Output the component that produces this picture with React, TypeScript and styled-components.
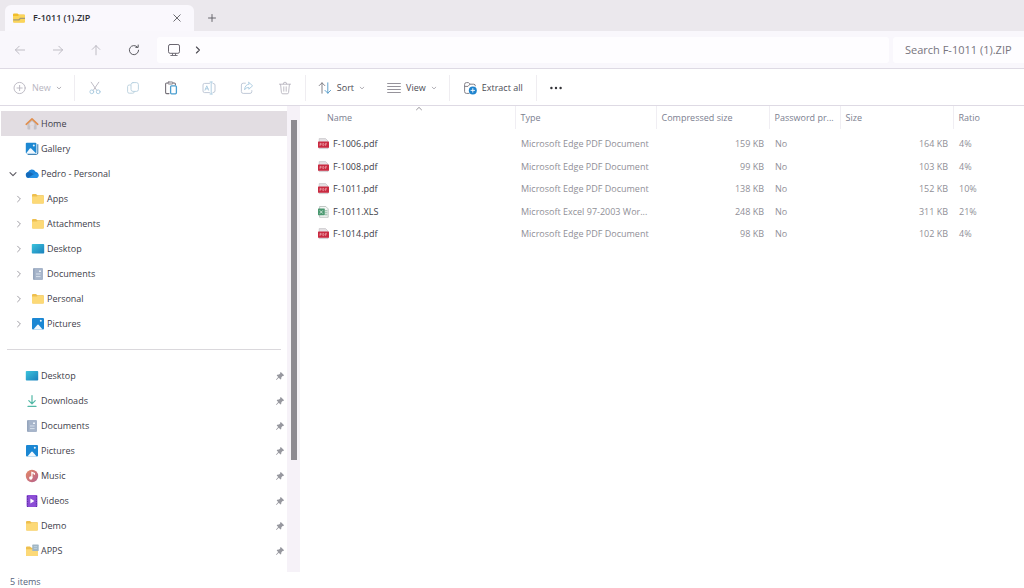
import React from "react";
import styled, { createGlobalStyle, css } from "styled-components";

const GlobalStyle = createGlobalStyle`
  *, *::before, *::after { box-sizing: border-box; }
  body {
    margin: 0;
    background: #ffffff;
    color: #3c3c44;
    font-family: "Open Sans", "Noto Sans", sans-serif;
    font-size: 9px;
    line-height: 14px;
  }
  button, input { font: inherit; color: inherit; }
  svg { display: block; flex: none; }
`;

const Window = styled.div`
  display: flex;
  flex-direction: column;
  min-height: 100vh;
`;

/* ---------- tab strip ---------- */

const TabStrip = styled.header`
  display: flex;
  align-items: flex-end;
  gap: 8px;
  height: 31px;
  padding-left: 5px;
  background: #ebe8ed;
`;

const Tab = styled.div`
  display: flex;
  align-items: center;
  gap: 7px;
  width: 189px;
  height: 26px;
  padding: 0 7px;
  border-radius: 6px 6px 0 0;
  background: #faf8fd;
`;

const TabTitle = styled.span`
  flex: 1;
  color: #2c2c32;
  font-weight: 600;
`;

const IconButton = styled.button`
  display: flex;
  align-items: center;
  justify-content: center;
  width: 20px;
  height: 26px;
  padding: 0;
  border: 0;
  background: none;
  color: #5a5a60;
`;

/* ---------- navigation bar ---------- */

const NavBar = styled.div`
  display: flex;
  align-items: stretch;
  gap: 4px;
  height: 38px;
  padding: 6px 0 5px;
  border-bottom: 1px solid #dedae4;
  background: #f9f7fc;
`;

const NavButtons = styled.nav`
  display: flex;
  align-items: center;
  width: 153px;
  padding-left: 1px;
`;

const NavButton = styled.button`
  display: flex;
  align-items: center;
  justify-content: center;
  width: 38px;
  height: 26px;
  padding: 0;
  border: 0;
  background: none;
  color: #5a5a60;
  &:disabled { color: #b8b5be; }
`;

const AddressBar = styled.div`
  display: flex;
  flex: 1;
  align-items: center;
  gap: 13px;
  padding-left: 10px;
  border-radius: 3px;
  background: #fefdff;
  color: #6a6670;
`;

const SearchInput = styled.input`
  width: 131px;
  padding: 0 0 0 12px;
  border: 0;
  border-radius: 3px 0 0 3px;
  background: #fefdff;
  font-size: 11px;
  &::placeholder { color: #77747d; opacity: 1; }
`;

/* ---------- command bar ---------- */

const CommandBar = styled.div`
  display: flex;
  align-items: center;
  height: 37px;
  padding: 1px 0 0 1px;
  border-bottom: 1px solid #dedae4;
`;

const CommandGroup = styled.div<{ $pad?: number; $gap?: number }>`
  display: flex;
  align-items: center;
  gap: ${(p) => p.$gap ?? 0}px;
  padding: 0 ${(p) => p.$pad ?? 0}px;
  & + & { border-left: 1px solid #efedf1; }
`;

const CommandButton = styled.button<{ $iconOnly?: boolean }>`
  display: flex;
  align-items: center;
  justify-content: ${(p) => (p.$iconOnly ? "center" : "flex-start")};
  gap: 5px;
  height: 26px;
  padding: 0;
  border: 0;
  background: none;
  color: #4c4c55;
  ${(p) => p.$iconOnly && css`width: 38px;`}
  &:disabled { color: #b8b6bf; }
`;

/* ---------- body ---------- */

const Body = styled.div`
  display: flex;
  flex: 1;
`;

const Sidebar = styled.aside`
  display: flex;
  flex: none;
  width: 300px;
`;

const Tree = styled.nav`
  flex: 1;
  padding: 5px 0 8px 1px;
`;

const TreeItem = styled.a<{ $nested?: boolean; $active?: boolean }>`
  display: flex;
  align-items: center;
  height: 25px;
  padding: 0 2px 0 ${(p) => (p.$nested ? 12 : 6)}px;
  background: ${(p) => (p.$active ? "#e2dde2" : "transparent")};
  color: #40404a;
  text-decoration: none;
`;

const Twisty = styled.span<{ $open?: boolean }>`
  display: flex;
  justify-content: center;
  width: 12px;
  margin-right: 6px;
  color: ${(p) => (p.$open ? "#5c5a62" : "#97949c")};
`;

const TreeIcon = styled.span`
  display: flex;
  justify-content: center;
  width: 14px;
  margin-right: 2px;
`;

const TreeLabel = styled.span`
  flex: 1;
`;

const Divider = styled.hr`
  height: 1px;
  margin: 13px 6px;
  border: 0;
  background: #dad8dc;
`;

const ScrollTrack = styled.div`
  width: 13px;
  padding: 14px 3px 0 4px;
  background: #f6f2f8;
`;

const ScrollThumb = styled.div`
  height: 340px;
  background: #8e8a92;
`;

const Content = styled.main`
  flex: 1;
  min-width: 0;
`;

const FileTable = styled.table`
  width: 100%;
  table-layout: fixed;
  border-collapse: collapse;
`;

const HeadCell = styled.th`
  position: relative;
  height: 23px;
  padding: 0 5px;
  border-left: 1px solid #f0eef3;
  overflow: hidden;
  color: #7b8090;
  font-weight: 400;
  text-align: left;
  text-overflow: ellipsis;
  white-space: nowrap;
  &:first-child { padding-left: 27px; border-left: 0; }
`;

const SortMark = styled.span`
  position: absolute;
  top: 0;
  left: 115px;
  color: #8d8a92;
`;

const FileRow = styled.tr`
  height: 23px;
  &:nth-child(even) { height: 22px; }
`;

const Spacer = styled.tr`
  height: 4px;
`;

const Cell = styled.td<{ $right?: boolean }>`
  padding: 0 5px 0 6px;
  overflow: hidden;
  color: #908f97;
  text-align: ${(p) => (p.$right ? "right" : "left")};
  text-overflow: ellipsis;
  white-space: nowrap;
`;

const NameCell = styled(Cell)`
  padding-left: 18px;
  color: #404048;
`;

const FileName = styled.span`
  display: flex;
  align-items: center;
  gap: 4px;
`;

const StatusBar = styled.footer`
  height: 16px;
  padding: 3px 10px 0;
  line-height: 13px;
  color: #56647c;
`;

/* ---------- icons ---------- */

type StrokeProps = { w?: number; h?: number; box?: string; children: React.ReactNode };
const Line = ({ w = 14, h = 14, box = "0 0 14 14", children }: StrokeProps) => (
  <svg width={w} height={h} viewBox={box} fill="none" stroke="currentColor" strokeWidth=".9" strokeLinecap="round" strokeLinejoin="round" aria-hidden="true">
    {children}
  </svg>
);

const FolderIcon = () => (
  <svg width="14" height="14" viewBox="0 0 14 14" aria-hidden="true">
    <path d="M1 3.2Q1 2 2 2h3l1.4 1.3H12q1 0 1 1V10.6q0 1-1 1H2q-1 0-1-1z" fill="#eebf4e" />
    <path d="M1 4.6h4.6L7 3.8h5.2q.8 0 .8.8v6q0 1-1 1H2q-1 0-1-1z" fill="#fcd977" />
  </svg>
);

const ZipIcon = () => (
  <svg width="14" height="14" viewBox="0 0 14 14" aria-hidden="true">
    <path d="M1 3.4q0-1 1-1h3.4l1.4 1.2H12q1 0 1 1v6q0 1-1 1H2q-1 0-1-1z" fill="#f1bd2c" />
    <path d="M1 5h5l1-1h6v6.6q0 1-1 1H2q-1 0-1-1z" fill="#fbd55a" />
    <path d="M1.2 8.8H7l1.4-1.5H13" fill="none" stroke="#a59b78" strokeWidth="1.3" />
  </svg>
);

const AppsFolderIcon = () => (
  <svg width="14" height="14" viewBox="0 0 14 14" aria-hidden="true">
    <path d="M1 3.4q0-1 1-1h3l1.4 1.3H12q1 0 1 1V11q0 1-1 1H2q-1 0-1-1z" fill="#eebf4e" />
    <path d="M1 5.2h6l1-.8h5V11q0 1-1 1H2q-1 0-1-1z" fill="#fcd977" />
    <rect x="7.3" y=".6" width="6.4" height="6.4" rx=".6" fill="#9fb5c4" />
    <path d="M8.8 2.6h3.4M8.8 4.4h3.4" stroke="#bccfdb" />
  </svg>
);

const HomeIcon = () => (
  <svg width="14" height="14" viewBox="0 0 14 14" aria-hidden="true">
    <path d="M2.4 6.5L7 2.6l4.6 3.9v5.3q0 .8-.8.8H8.8V8.8H5.2v3.8h-2q-.8 0-.8-.8z" fill="#c4c2c8" />
    <path d="M4.6 6.2L7 4.2l2.4 2v2.6H4.6z" fill="#e2dde2" />
    <path d="M1.2 7.3L7 1.8l5.8 5.5" fill="none" stroke="#e18f4e" strokeWidth="1.6" strokeLinecap="round" strokeLinejoin="round" />
  </svg>
);

const GalleryIcon = () => (
  <svg width="14" height="14" viewBox="0 0 14 14" aria-hidden="true">
    <path d="M2.6 12.4h8.8q1.4 0 1.4-1.4V2.2" fill="none" stroke="#2f77ad" strokeWidth="1" />
    <rect x=".8" y=".8" width="10.6" height="10.8" rx="1" fill="#1d88d2" />
    <path d="M1 11.6L4.8 6.6q.7-.8 1.4 0l5 5z" fill="#f2f8fd" />
    <circle cx="8.8" cy="3.6" r="1" fill="#e8f4fc" />
  </svg>
);

const PicturesIcon = () => (
  <svg width="14" height="14" viewBox="0 0 14 14" aria-hidden="true">
    <rect x="1" y="1" width="12" height="11.6" rx="1" fill="#1b87d3" />
    <path d="M2.4 12.6L6.2 8q.8-.9 1.6 0l3.8 4.6z" fill="#f2f8fd" />
    <circle cx="9.8" cy="3.8" r="1" fill="#e8f4fc" />
  </svg>
);

const CloudIcon = () => (
  <svg width="14" height="14" viewBox="0 0 14 14" aria-hidden="true">
    <path d="M3.8 11a3 3 0 01-.8-5.9 4.1 4.1 0 017.5-.3Q13.6 5.4 13.6 8.2 13.4 11 10.6 11z" fill="#1a84da" />
    <path d="M3.6 11A3 3 0 012.8 5.3q2.6-.4 4.6 1.2l3.2 2z" fill="#1569b8" />
    <path d="M3 11L8.2 7.6q3-1.4 5.3.2Q13.6 11 10.6 11z" fill="#2490e4" />
  </svg>
);

const DesktopIcon = () => (
  <svg width="14" height="14" viewBox="0 0 14 14" aria-hidden="true">
    <defs>
      <linearGradient id="desktopFill" x1="0" y1="0" x2="1" y2="1">
        <stop offset="0" stopColor="#3cc4dc" />
        <stop offset="1" stopColor="#1a80bc" />
      </linearGradient>
    </defs>
    <rect x=".8" y="2" width="12.4" height="9.6" rx=".8" fill="url(#desktopFill)" />
  </svg>
);

const DocumentsIcon = () => (
  <svg width="14" height="14" viewBox="0 0 14 14" aria-hidden="true">
    <rect x="2.2" y="1" width="9.8" height="12" rx="1" fill="#a7b5ca" />
    <path d="M2.8 1.4v11.2" stroke="#8a9bb6" strokeWidth="1.1" />
    <path d="M8 4.2h2" stroke="#eef3f8" strokeWidth="1.4" />
    <path d="M5 7h4.6M5 9.6h4.6" stroke="#dde5ef" strokeWidth=".9" />
  </svg>
);

const DownloadsIcon = () => (
  <svg width="14" height="14" viewBox="0 0 14 14" fill="none" stroke="#52b8a6" strokeWidth="1.2" strokeLinecap="round" strokeLinejoin="round" aria-hidden="true">
    <path d="M7 1.5v8M3.8 6.6L7 9.8l3.2-3.2M3 12.4h8" />
  </svg>
);

const MusicIcon = () => (
  <svg width="14" height="14" viewBox="0 0 14 14" aria-hidden="true">
    <defs>
      <linearGradient id="musicFill" x1="0" y1="0" x2="1" y2="1">
        <stop offset="0" stopColor="#e58a66" />
        <stop offset="1" stopColor="#b5608c" />
      </linearGradient>
    </defs>
    <circle cx="7" cy="7" r="6.2" fill="url(#musicFill)" />
    <circle cx="5.8" cy="9" r="1.7" fill="#fff" />
    <path d="M6.9 9V3.4l2.5 1v1.4" fill="none" stroke="#fff" strokeWidth="1.2" />
  </svg>
);

const VideosIcon = () => (
  <svg width="14" height="14" viewBox="0 0 14 14" aria-hidden="true">
    <rect x="1.6" y="1" width="10.8" height="12" rx="1" fill="#8d4ed6" />
    <path d="M2.6 2v11M11.4 2v11" stroke="#5a2aa4" strokeWidth="1" strokeDasharray="1.4 1" />
    <path d="M5.4 4.6L9.4 7l-4 2.4z" fill="#fff" />
  </svg>
);

const PinIcon = () => (
  <svg width="10" height="10" viewBox="0 0 10 10" aria-hidden="true">
    <path d="M5.8 1L9.1 4.2 8.2 4.9 7.6 4.9 6.4 6.2 6.2 8 5.4 8.4 3.8 6.7 1.4 9 .9 8.7 3.2 6.1 1.7 4.6 2.2 3.8 4 3.6 5.2 2.4 5.1 1.7z" fill="#97989f" />
  </svg>
);

const PdfIcon = () => (
  <svg width="11" height="12" viewBox="0 0 11 12" aria-hidden="true">
    <path d="M1.2.6h6.4L10 3v7.6H1.2z" fill="#e4e1e4" stroke="#c4c1c5" strokeWidth=".7" />
    <rect x="0" y="3.4" width="11" height="6.4" rx=".6" fill="#c92a40" />
    <path d="M2 7.9V5.4h1.2v1.3H2M4.8 5.4v2.2h.7q.9-1.1 0-2.2zM7.4 7.9V5.4h1.5M7.4 6.7h1.2" fill="none" stroke="#f2b8bd" strokeWidth=".6" />
  </svg>
);

const XlsIcon = () => (
  <svg width="11" height="12" viewBox="0 0 11 12" aria-hidden="true">
    <path d="M1.6.5h6.2l2.4 2.4v8.4H1.6z" fill="#f4f6f5" stroke="#a9b2ad" strokeWidth=".7" />
    <path d="M7 4.8h2.4M7 6.8h2.4M7 8.8h2.4" stroke="#7fb195" strokeWidth=".9" />
    <rect x="0" y="2.6" width="6.8" height="6.6" rx=".4" fill="#4a9870" />
    <path d="M1.8 4.4l3 3.2M4.8 4.4l-3 3.2" stroke="#d4e9dd" strokeWidth=".9" />
  </svg>
);

const ChevronDown = () => (
  <Line w={8} h={8} box="0 0 8 8"><path d="M1 2.6L4 5.6 7 2.6" strokeWidth="1.1" /></Line>
);
const SmallChevron = () => (
  <Line w={6} h={6} box="0 0 6 6"><path d="M1.2 2.2L3 3.9 4.8 2.2" stroke="#aaa8b0" /></Line>
);
const ChevronRight = () => (
  <Line w={8} h={8} box="0 0 8 8"><path d="M2.6 1.2L5.4 4 2.6 6.8" /></Line>
);

/* ---------- data ---------- */

type Place = { label: string; icon: React.ReactNode; nested?: boolean; active?: boolean; open?: boolean };

const places: Place[] = [
  { label: "Home", icon: <HomeIcon />, active: true },
  { label: "Gallery", icon: <GalleryIcon /> },
  { label: "Pedro - Personal", icon: <CloudIcon />, open: true },
  { label: "Apps", icon: <FolderIcon />, nested: true },
  { label: "Attachments", icon: <FolderIcon />, nested: true },
  { label: "Desktop", icon: <DesktopIcon />, nested: true },
  { label: "Documents", icon: <DocumentsIcon />, nested: true },
  { label: "Personal", icon: <FolderIcon />, nested: true },
  { label: "Pictures", icon: <PicturesIcon />, nested: true },
];

const pinned: Place[] = [
  { label: "Desktop", icon: <DesktopIcon /> },
  { label: "Downloads", icon: <DownloadsIcon /> },
  { label: "Documents", icon: <DocumentsIcon /> },
  { label: "Pictures", icon: <PicturesIcon /> },
  { label: "Music", icon: <MusicIcon /> },
  { label: "Videos", icon: <VideosIcon /> },
  { label: "Demo", icon: <FolderIcon /> },
  { label: "APPS", icon: <AppsFolderIcon /> },
];

const files = [
  { name: "F-1006.pdf", type: "Microsoft Edge PDF Document", packed: "159 KB", size: "164 KB", ratio: "4%" },
  { name: "F-1008.pdf", type: "Microsoft Edge PDF Document", packed: "99 KB", size: "103 KB", ratio: "4%" },
  { name: "F-1011.pdf", type: "Microsoft Edge PDF Document", packed: "138 KB", size: "152 KB", ratio: "10%" },
  { name: "F-1011.XLS", type: "Microsoft Excel 97-2003 Wor...", packed: "248 KB", size: "311 KB", ratio: "21%" },
  { name: "F-1014.pdf", type: "Microsoft Edge PDF Document", packed: "98 KB", size: "102 KB", ratio: "4%" },
];

/* ---------- page ---------- */

export default function App() {
  return (
    <>
      <GlobalStyle />
      <Window>
        <TabStrip>
          <Tab>
            <ZipIcon />
            <TabTitle>F-1011 (1).ZIP</TabTitle>
            <IconButton aria-label="Close tab">
              <Line w={8} h={8} box="0 0 8 8"><path d="M.8.8l6.4 6.4M7.2.8L.8 7.2" /></Line>
            </IconButton>
          </Tab>
          <IconButton aria-label="New tab">
            <Line w={8} h={8} box="0 0 8 8"><path d="M4 .5v7M.5 4h7" /></Line>
          </IconButton>
        </TabStrip>

        <NavBar>
          <NavButtons>
            <NavButton disabled aria-label="Back">
              <Line w={12} h={12} box="0 0 12 12"><path d="M10.6 6H1.4M5.2 2.2L1.4 6l3.8 3.8" /></Line>
            </NavButton>
            <NavButton disabled aria-label="Forward">
              <Line w={12} h={12} box="0 0 12 12"><path d="M1.4 6h9.2M6.8 2.2L10.6 6 6.8 9.8" /></Line>
            </NavButton>
            <NavButton disabled aria-label="Up">
              <Line w={12} h={12} box="0 0 12 12"><path d="M6 10.8V1.6M2.2 5.4L6 1.6l3.8 3.8" /></Line>
            </NavButton>
            <NavButton aria-label="Refresh">
              <Line w={12} h={12} box="0 0 12 12"><path d="M10.6 6.2A4.6 4.6 0 119.4 3M10.2 1v2.4H7.8" strokeWidth="1" /></Line>
            </NavButton>
          </NavButtons>
          <AddressBar>
            <Line>
              <rect x="1.5" y="1.5" width="11" height="8.8" rx="1.6" strokeWidth="1" />
              <path d="M5.5 10.6v1.6M8.5 10.6v1.6M3.8 12.5h6.4" />
            </Line>
            <Line w={8} h={8} box="0 0 8 8"><path d="M2.4 1L5.4 4l-3 3" stroke="#4c4a52" strokeWidth="1.1" /></Line>
          </AddressBar>
          <SearchInput type="search" aria-label="Search F-1011 (1).ZIP" placeholder="Search F-1011 (1).ZIP" />
        </NavBar>

        <CommandBar>
          <CommandGroup $pad={12}>
            <CommandButton disabled>
              <Line>
                <circle cx="6.6" cy="7" r="5.6" />
                <path d="M6.6 4.4v5.2M4 7h5.2" />
              </Line>
              New
              <SmallChevron />
            </CommandButton>
          </CommandGroup>
          <CommandGroup $pad={1}>
            <CommandButton disabled $iconOnly aria-label="Cut">
              <Line>
                <path d="M3.2 1.2l5.6 8.2M10.8 1.2L5.2 9.4" />
                <g stroke="#a9cbe0"><circle cx="3.8" cy="10.8" r="1.9" /><circle cx="10.2" cy="10.8" r="1.9" /></g>
              </Line>
            </CommandButton>
            <CommandButton disabled $iconOnly aria-label="Copy">
              <Line>
                <path d="M4.4 4H3.2Q1.6 4 1.6 5.6v5q0 1.6 1.6 1.6h3.6q1.4 0 1.6-1.4" stroke="#b9cfdd" />
                <rect x="5" y="1.6" width="7.4" height="8.8" rx="2" stroke="#b5cfdf" />
              </Line>
            </CommandButton>
            <CommandButton $iconOnly aria-label="Paste">
              <Line>
                <path d="M5 12.6H2.6q-1 0-1-1V3q0-1 1-1h1M9 2h1.4q1 0 1 1v1" stroke="#77727a" strokeWidth="1.1" />
                <rect x="3.8" y="1" width="5.2" height="2" rx="1" stroke="#77727a" />
                <rect x="6.6" y="4.8" width="5.8" height="8" rx="1" stroke="#4a9ed0" strokeWidth="1.3" />
              </Line>
            </CommandButton>
            <CommandButton disabled $iconOnly aria-label="Rename">
              <Line>
                <path d="M7.5 2.4H2.6q-1.6 0-1.6 1.6v6q0 1.6 1.6 1.6h4.9M11 2.4q2 0 2 1.6v6q0 1.6-2 1.6" stroke="#b9c3d2" />
                <path d="M9.2 1v12M8 1h2.4M8 13h2.4M3 9.2L4.8 4.8l1.8 4.4M3.6 7.8h2.4" stroke="#a9cbe0" />
              </Line>
            </CommandButton>
            <CommandButton disabled $iconOnly aria-label="Share">
              <Line>
                <path d="M5.4 2.2H3.2q-1.8 0-1.8 1.8v6.6q0 1.8 1.8 1.8H10q1.8 0 1.8-1.8v-1" stroke="#b9c3d2" />
                <path d="M8.8 1.4l3.8 3.4-3.8 3.4V6.4Q5.8 6.2 4.6 8.8 4.8 3.8 8.8 3.2z" stroke="#a9cbe0" />
              </Line>
            </CommandButton>
            <CommandButton disabled $iconOnly aria-label="Delete">
              <Line><path d="M1.4 3.2h11.2M5.2 3Q5.2 1.2 7 1.2T8.8 3M2.6 3.4l.8 8q.1 1.4 1.4 1.4h4.4q1.3 0 1.4-1.4l.8-8M5.8 5.8v4.4M8.2 5.8v4.4" /></Line>
            </CommandButton>
          </CommandGroup>
          <CommandGroup $pad={12} $gap={22}>
            <CommandButton>
              <Line>
                <path d="M4 12.2V1.8M1.2 4.6L4 1.8l2.8 2.8" stroke="#77747c" />
                <path d="M9.8 1.8v10.4M7 9.4l2.8 2.8 2.8-2.8" stroke="#4f97c6" />
              </Line>
              Sort
              <SmallChevron />
            </CommandButton>
            <CommandButton>
              <Line><path d="M.6 2.5h12.8M.6 5.5h12.8M.6 8.5h12.8M.6 11.5h12.8" stroke="#8a8790" /></Line>
              View
              <SmallChevron />
            </CommandButton>
          </CommandGroup>
          <CommandGroup $pad={13}>
            <CommandButton>
              <Line>
                <path d="M6 12.4H3.4q-1.8 0-1.8-1.8V3.4q0-1.8 1.8-1.8h2L7 3.2h3.8q1.6 0 1.6 1.6M1.8 5.4H5l2-2.2" stroke="#77747c" />
                <circle cx="9.8" cy="9.4" r="4" fill="#1f84ce" stroke="none" />
                <path d="M9.8 7.6v3.6M8 9.4h3.6" stroke="#fff" />
              </Line>
              Extract all
            </CommandButton>
          </CommandGroup>
          <CommandGroup>
            <CommandButton $iconOnly aria-label="More options">
              <svg width="14" height="14" viewBox="0 0 14 14" fill="#333338" aria-hidden="true">
                <circle cx="2.4" cy="7" r="1.2" /><circle cx="7" cy="7" r="1.2" /><circle cx="11.6" cy="7" r="1.2" />
              </svg>
            </CommandButton>
          </CommandGroup>
        </CommandBar>

        <Body>
          <Sidebar>
            <Tree aria-label="Folders">
              {places.map((p) => (
                <TreeItem key={p.label} href="#" $nested={p.nested} $active={p.active}>
                  <Twisty $open={p.open}>
                    {p.open && <ChevronDown />}
                    {p.nested && <ChevronRight />}
                  </Twisty>
                  <TreeIcon>{p.icon}</TreeIcon>
                  <TreeLabel>{p.label}</TreeLabel>
                </TreeItem>
              ))}
              <Divider />
              {pinned.map((p) => (
                <TreeItem key={p.label} href="#">
                  <Twisty />
                  <TreeIcon>{p.icon}</TreeIcon>
                  <TreeLabel>{p.label}</TreeLabel>
                  <PinIcon />
                </TreeItem>
              ))}
            </Tree>
            <ScrollTrack><ScrollThumb /></ScrollTrack>
          </Sidebar>

          <Content>
            <FileTable>
              <colgroup>
                <col style={{ width: 215 }} />
                <col style={{ width: 141 }} />
                <col style={{ width: 113 }} />
                <col style={{ width: 71 }} />
                <col style={{ width: 113 }} />
                <col />
              </colgroup>
              <thead>
                <tr>
                  <HeadCell aria-sort="ascending">
                    Name
                    <SortMark><Line w={8} h={5} box="0 0 8 5"><path d="M1.5 3.8L4 1.4l2.5 2.4" /></Line></SortMark>
                  </HeadCell>
                  <HeadCell>Type</HeadCell>
                  <HeadCell>Compressed size</HeadCell>
                  <HeadCell>Password pr...</HeadCell>
                  <HeadCell>Size</HeadCell>
                  <HeadCell>Ratio</HeadCell>
                </tr>
              </thead>
              <tbody>
                <Spacer aria-hidden="true" />
                {files.map((f) => (
                  <FileRow key={f.name}>
                    <NameCell>
                      <FileName>
                        {f.name.endsWith("pdf") ? <PdfIcon /> : <XlsIcon />}
                        {f.name}
                      </FileName>
                    </NameCell>
                    <Cell>{f.type}</Cell>
                    <Cell $right>{f.packed}</Cell>
                    <Cell>No</Cell>
                    <Cell $right>{f.size}</Cell>
                    <Cell>{f.ratio}</Cell>
                  </FileRow>
                ))}
              </tbody>
            </FileTable>
          </Content>
        </Body>

        <StatusBar>5 items</StatusBar>
      </Window>
    </>
  );
}
